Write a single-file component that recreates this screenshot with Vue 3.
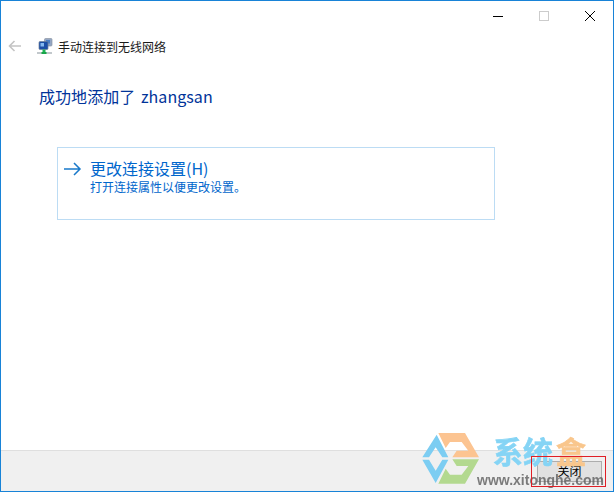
<script setup>
</script>

<template>
  <div class="window">
    <div class="titlebar">
      <button class="ctl" aria-label="最小化">
        <svg width="10" height="10" viewBox="0 0 10 10"><path d="M0 5.5H10" stroke="#000" fill="none"/></svg>
      </button>
      <button class="ctl" aria-label="最大化">
        <svg width="10" height="10" viewBox="0 0 10 10"><rect x=".5" y=".5" width="9" height="9" stroke="#ccc" fill="none"/></svg>
      </button>
      <button class="ctl" aria-label="关闭窗口">
        <svg width="10" height="10" viewBox="0 0 10 10"><path d="M0 0L10 10M10 0L0 10" stroke="#000" fill="none"/></svg>
      </button>
    </div>
    <div class="nav">
      <svg class="back" width="14" height="12" viewBox="0 0 14 12"><path d="M13 6H1.5M6.5 1L1.5 6L6.5 11" stroke="#c4c4c4" stroke-width="1.6" fill="none"/></svg>
      <svg class="neticon" width="16" height="17" viewBox="0 0 16 17">
        <rect x="7.5" y="0.5" width="7.5" height="7.5" rx="1" fill="#93a6c4" stroke="#8c96a3" stroke-width=".7"/>
        <rect x="9" y="2" width="4" height="3.5" fill="#4a7fc6"/>
        <rect x="2" y="3.5" width="9" height="8" rx="1" fill="#1c4fa6" stroke="#6f7f98" stroke-width=".7"/>
        <rect x="3.5" y="5" width="3.5" height="3.5" fill="#86b9ef"/>
        <rect x="5.5" y="11.5" width="3" height="3" fill="#1fb455"/>
        <rect x="0" y="14" width="15" height="2" fill="#c2c8cc"/>
        <rect x="4.5" y="14" width="5" height="2" fill="#18a548"/>
      </svg>
      <span class="navtitle">手动连接到无线网络</span>
    </div>
    <main class="main">
      <h1 class="heading">成功地添加了 zhangsan</h1>
      <div class="option">
        <svg class="arrow" width="18" height="14" viewBox="0 0 18 14"><path d="M0 7H16M10 1L16 7L10 13" stroke="#1979ca" stroke-width="1.5" fill="none"/></svg>
        <div class="optiontext">
          <div class="optiontitle">更改连接设置(H)</div>
          <div class="optiondesc">打开连接属性以便更改设置。</div>
        </div>
      </div>
    </main>
    <footer class="footer">
      <button class="closebtn">关闭</button>
    </footer>
    <div class="watermark">
      <svg class="wmlogo" width="70" height="64" viewBox="0 0 210 192">
        <path d="M65 20L100 88H82L62 58L42 88H22Z" fill="#7ccdf2"/>
        <path d="M22 95H42L62 128L82 95H100L62 165Z" fill="#7ccdf2"/>
        <path d="M70 15H150L192 88H112L125 68H160L140 42H105L92 60Z" fill="#fcc491"/>
        <path d="M70 167H150L192 94H112L125 114H160L140 140H105L92 122Z" fill="#b3d98f"/>
      </svg>
      <span class="wmname">系统<span class="wmorange">盒</span></span>
      <span class="wmurl">www.xitonghe.com</span>
      <span class="redbox"></span>
    </div>
  </div>
</template>

<style>
html, body { margin: 0; padding: 0; background: #fff; }
</style>

<style scoped>
.window {
  box-sizing: border-box;
  position: relative;
  width: 614px;
  height: 492px;
  border: 1px solid #1883d7;
  background: #fff;
  display: flex;
  flex-direction: column;
  font-family: "Noto Sans CJK SC", "Liberation Sans", sans-serif;
  overflow: hidden;
}
.titlebar { display: flex; justify-content: flex-end; height: 29px; }
.ctl { width: 46px; height: 29px; border: 0; background: none; padding: 0; display: flex; align-items: center; justify-content: center; }
.nav { display: flex; align-items: center; height: 32px; padding-left: 7px; }
.back { margin-right: 15px; }
.neticon { margin-right: 5px; }
.navtitle { font-size: 12px; color: #1a1a1a; }
.main { flex: 1; padding: 0 38px; }
.heading { margin: 22px 0 0; font-weight: 400; font-size: 16px; line-height: 24px; color: #003399; word-spacing: 2px; letter-spacing: .05px; }
.option { box-sizing: border-box; width: 438px; height: 73px; margin-top: 39px; margin-left: 18px; border: 1px solid #bcdcf4; display: flex; padding: 10px 6px; }
.arrow { margin-top: 4px; margin-right: 8px; }
.optiontitle { font-size: 16px; line-height: 21px; color: #0066cc; }
.optiondesc { font-size: 12px; line-height: 16px; color: #0066cc; }
.footer { height: 41px; box-sizing: border-box; background: #f0f0f0; border-top: 1px solid #dfdfdf; display: flex; justify-content: flex-end; align-items: flex-start; padding: 10px 11px 0 0; }
.closebtn { box-sizing: border-box; width: 65px; height: 21px; border: 1px solid #adadad; background: #e1e1e1; font-family: inherit; font-size: 12px; line-height: 15px; padding: 0 0 2px; color: #000; }
.watermark { position: absolute; inset: 0; pointer-events: none; }
.wmlogo { position: absolute; left: 414px; top: 427px; filter: blur(.3px); }
.wmname { position: absolute; left: 492px; top: 429px; font-size: 30px; line-height: 40px; font-weight: 700; color: #85d4f5; -webkit-text-stroke: .6px currentColor; filter: blur(.4px); white-space: nowrap; }
.wmorange { color: #f9c68c; margin-left: 3px; }
.wmurl { position: absolute; left: 476px; top: 471px; font-family: "Liberation Sans", sans-serif; font-size: 14px; line-height: 16px; font-weight: 700; color: #5f5f5f; opacity: .8; filter: blur(.3px); white-space: nowrap; }
.redbox { position: absolute; left: 530px; top: 455px; width: 73px; height: 29px; border: 1px solid #e01f26; }
</style>
